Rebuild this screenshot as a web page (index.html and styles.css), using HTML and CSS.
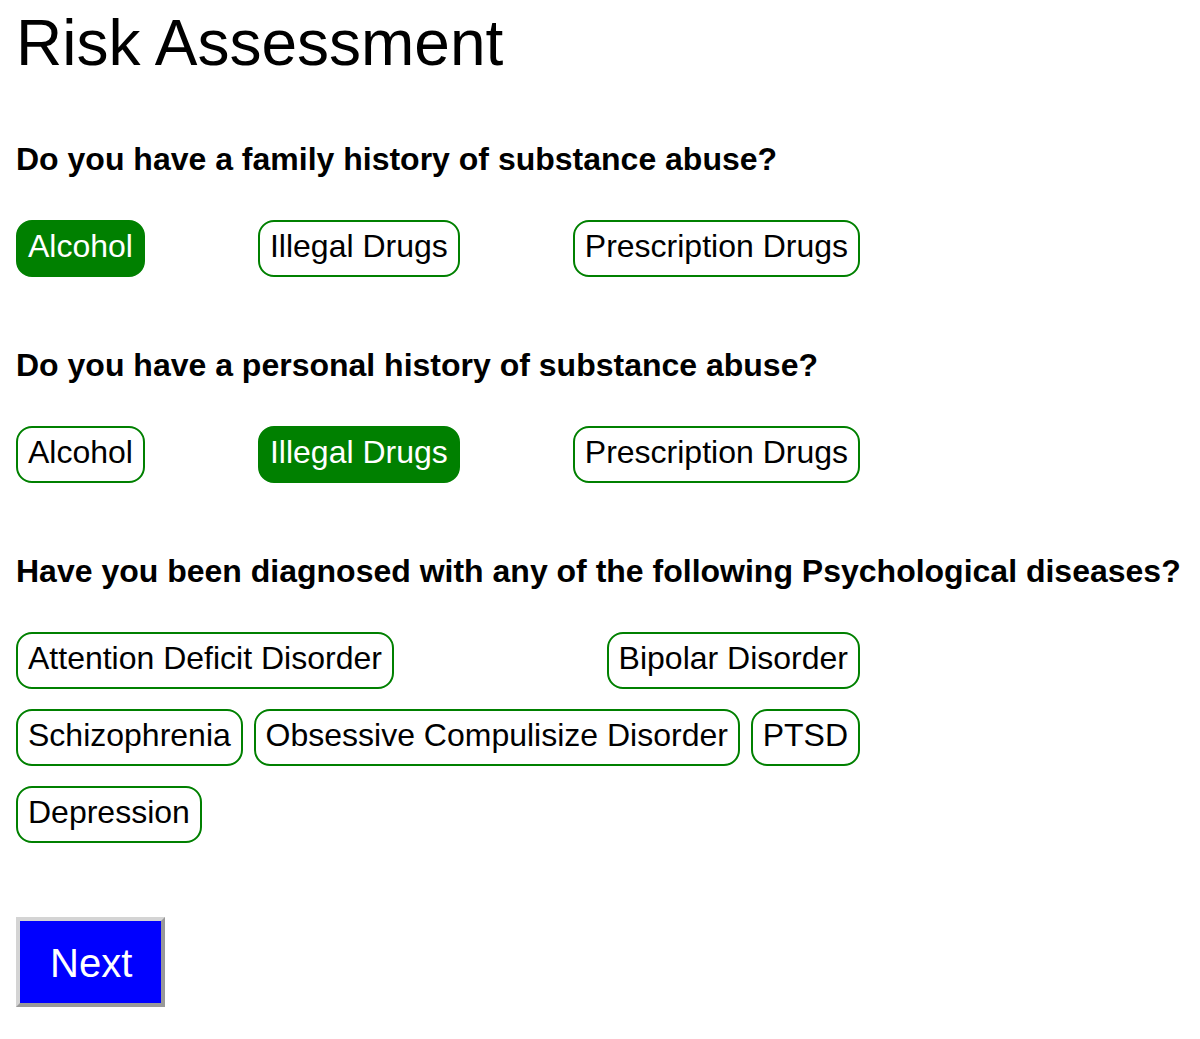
FILE: index.html
```html
<!DOCTYPE html>
<html lang="en">
<head>
<meta charset="utf-8">
<title>Risk Assessment</title>
<link rel="stylesheet" href="styles.css">
</head>
<body>
<div class="page">
  <h1 class="title">Risk Assessment</h1>

  <section class="section">
    <h2 class="question">Do you have a family history of substance abuse?</h2>
    <div class="options">
      <button class="option selected">Alcohol</button>
      <button class="option">Illegal Drugs</button>
      <button class="option">Prescription Drugs</button>
    </div>
  </section>

  <section class="section">
    <h2 class="question">Do you have a personal history of substance abuse?</h2>
    <div class="options">
      <button class="option">Alcohol</button>
      <button class="option selected">Illegal Drugs</button>
      <button class="option">Prescription Drugs</button>
    </div>
  </section>

  <section class="section">
    <h2 class="question">Have you been diagnosed with any of the following Psychological diseases?</h2>
    <div class="options">
      <button class="option">Attention Deficit Disorder</button>
      <button class="option">Bipolar Disorder</button>
      <button class="option">Schizophrenia</button>
      <button class="option">Obsessive Compulisize Disorder</button>
      <button class="option">PTSD</button>
      <button class="option">Depression</button>
    </div>
  </section>

  <div class="actions">
    <button class="next">Next</button>
  </div>
</div>
</body>
</html>
```

FILE: styles.css
```css
html, body {
  margin: 0;
  padding: 0;
  background: #ffffff;
}

body {
  font-family: "Liberation Sans", Arial, Helvetica, sans-serif;
  color: #000000;
}

.page {
  padding: 6px 16px 0 16px;
}

.title {
  margin: 0 0 61px 0;
  font-size: 64px;
  font-weight: normal;
  line-height: 74px;
}

.section + .section {
  margin-top: 70px;
}

.question {
  margin: 0 0 42px 0;
  font-size: 32px;
  font-weight: bold;
  line-height: 37px;
  white-space: nowrap;
}

.options {
  max-width: 844px;
  display: flex;
  flex-wrap: wrap;
  justify-content: space-between;
  row-gap: 20px;
  column-gap: 0;
}

.option {
  font-family: "Liberation Sans", Arial, Helvetica, sans-serif;
  font-size: 32px;
  line-height: 37px;
  color: #000000;
  background: #ffffff;
  border: 2px solid #008000;
  border-radius: 16px;
  padding: 6px 10px 10px 10px;
  margin: 0;
  cursor: pointer;
}

.option.selected {
  background: #008000;
  color: #ffffff;
}

.actions {
  margin-top: 74px;
}

.next {
  font-family: "Liberation Sans", Arial, Helvetica, sans-serif;
  font-size: 40px;
  line-height: 46px;
  color: #ffffff;
  background: #0000ff;
  border-style: solid;
  border-width: 4px;
  border-color: #d4d4d4 #999999 #999999 #d4d4d4;
  padding: 19px 29px 17px 30px;
  margin: 0;
  border-radius: 0;
  cursor: pointer;
}
```
